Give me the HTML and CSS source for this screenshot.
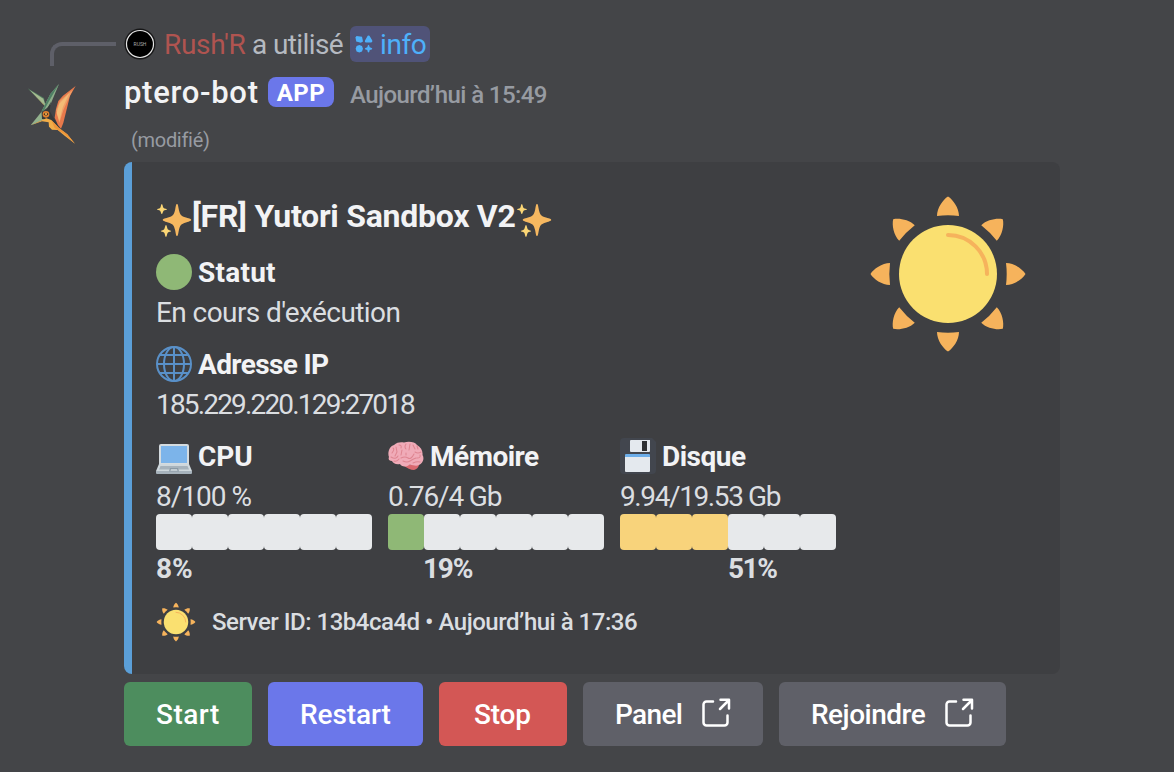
FILE: index.html
```
<!DOCTYPE html>
<html lang="fr">
<head>
<meta charset="utf-8">
<title>ptero-bot</title>
<link rel="stylesheet" href="styles.css">
</head>
<body>
<svg class="defs" width="0" height="0">
  <defs>
    <path id="ray" d="M80 2.500C85 5.500 91 14 91 22Q80 20.600 69 22C69 14 75 5.500 80 2.500Z"/>
    <symbol id="sun" viewBox="0 0 160 160">
      <g fill="#f6b35c">
        <use href="#ray"/>
        <use href="#ray" transform="rotate(45 80 80)"/>
        <use href="#ray" transform="rotate(90 80 80)"/>
        <use href="#ray" transform="rotate(135 80 80)"/>
        <use href="#ray" transform="rotate(180 80 80)"/>
        <use href="#ray" transform="rotate(225 80 80)"/>
        <use href="#ray" transform="rotate(270 80 80)"/>
        <use href="#ray" transform="rotate(315 80 80)"/>
      </g>
      <circle cx="80" cy="80" r="49" fill="#fae070"/>
      <path d="M80 41A39 39 0 0 1 119 80" fill="none" stroke="#f6b35c" stroke-width="4" stroke-linecap="round"/>
    </symbol>
    <symbol id="sparkles" viewBox="0 0 36 36">
      <path fill="#f6b860" d="M21 2C21.800 2 22 3 22.800 7.500C24 13 25 14 30 15.600C34 16.800 35.200 17.200 35.200 18S34 19.200 30 20.400C25 22 24 23 22.800 28.500C22 33 21.800 34 21 34S20 33 19.200 28.500C18 23 17 22 12 20.400C8 19.200 6.800 18.800 6.800 18S8 16.800 12 15.600C17 14 18 13 19.200 7.500C20 3 20.200 2 21 2Z"/>
      <path fill="#fbd675" d="M5.800 2C6.600 2 6.700 5 7.600 5.900S11 6.500 11 7.300S8.500 7.800 7.600 8.700S6.600 12 5.800 12S5 9.600 4.100 8.700S1 8 1 7.300S3.200 6.800 4.100 5.900S5 2 5.800 2ZM10 23C10.900 23 11 26.400 12 27.400S15.200 28.200 15.200 29S13 29.600 12 30.600S10.900 35 10 35S9 31.600 8 30.600S4.800 29.800 4.800 29S7 28.400 8 27.400S9.100 23 10 23Z"/>
    </symbol>
    <symbol id="external" viewBox="0 0 32 32">
      <path d="M13 4.500H6.500A3 3 0 0 0 3.500 7.500V25.500A3 3 0 0 0 6.500 28.500H24.500A3 3 0 0 0 27.500 25.500V18.500M20.500 2.800H29V11.500M28.500 3.500L20 12" fill="none" stroke="#fff" stroke-width="2.500" stroke-linecap="round" stroke-linejoin="round"/>
    </symbol>
  </defs>
</svg>

<main class="message">
  <aside class="gutter">
    <div class="spine"></div>
    <svg class="avatar" viewBox="75 220 160 185">
      <path fill="#527a60" d="M83 236L132 265L137 292Z"/>
      <path fill="#a4bc91" d="M88 240L130 267L137 289L125 278Z"/>
      <path fill="#e9ad62" d="M96 248L126 279L137 290L129 284Z"/>
      <path fill="#8fae8b" d="M177 223L151 253L124 306L141 295L151 285Z"/>
      <path fill="#4f8065" d="M177 223L147 275L132 302L124 306L151 253Z"/>
      <path fill="#92b18d" d="M124 307L92 347L107 341L142 325Z"/>
      <path fill="#36393a" d="M153 276L149 304L178 355L166 353L144 329L126 328L125 309L139 301Z"/>
      <path fill="#e8794b" d="M227 229L210 259L190 340L183 357L174 346L164 324L168 298L175 274L189 258Z"/>
      <path fill="#eea068" d="M218 240L180 273L169 302L178 340L190 302Z"/>
      <path fill="#f3bc76" d="M208 251L178 282L170 310L178 334L188 294Z"/>
      <path fill="#f2ad48" d="M92 347L139 326L154 331L177 355L202 374L225 402L195 379L173 361L156 360L147 351L146 338L126 335Z"/>
      <path fill="#ef9439" d="M154 331L177 355L202 374L225 402L193 373L164 355Z"/>
      <circle cx="138" cy="314" r="10" fill="#e1812d"/>
      <path d="M131 314Q137 305 145 313Q139 322 131 314Z" fill="#332620"/>
      <circle cx="138" cy="313" r="3" fill="#ffc45d"/>
    </svg>
  </aside>

  <section class="content">
    <div class="reply">
      <svg class="reply-avatar" viewBox="0 0 32 32">
        <circle cx="16" cy="16" r="15.500" fill="#171718"/>
        <circle cx="16" cy="16" r="13.500" fill="#000" stroke="#e6e6e6" stroke-width="1.200"/>
        <text x="16" y="17.800" text-anchor="middle" class="tiny">RUSH</text>
      </svg>
      <span class="reply-user">Rush'R</span>
      <span class="reply-text">a utilisé</span>
      <span class="command">
        <svg width="18" height="18" viewBox="0 0 18 18" fill="#4eb0fa">
          <path d="M1.500 1L7 1.800L8 6.500L5.800 7.700L1.200 6.600L.5 2.500Z"/>
          <path d="M13.500 .6Q14.500 .6 15.200 2L17.300 5.600Q17.700 7.500 16 7.500H11Q9.300 7.500 10 5.600L12 2Q12.600 .6 13.500 .6Z"/>
          <path d="M3 10.500L4.300 10L5.600 10.500L7 11L7.500 12.400L8 13.700L7.500 15L7 16.400L5.600 16.900L4.300 17.400L3 16.900L1.600 16.400L1.100 15L.6 13.700L1.100 12.400L1.600 11Z"/>
          <path d="M13.500 9.800Q14.300 9.800 14.700 12.300Q17.300 12.900 17.300 13.700T14.700 15Q14.300 17.500 13.500 17.500T12.300 15Q9.800 14.500 9.800 13.700T12.300 12.300Q12.700 9.800 13.500 9.800Z"/>
        </svg>
        <span class="command-name">info</span>
      </span>
    </div>

    <header class="author">
      <span class="name">ptero-bot</span>
      <span class="badge">APP</span>
      <time class="time">Aujourd’hui à 15:49</time>
    </header>
    <div class="edited">(modifié)</div>

    <article class="embed">
      <div class="embed-body">
        <h1 class="title"><svg class="emoji"><use href="#sparkles"/></svg><span class="title-text">[FR] Yutori Sandbox V2</span><svg class="emoji"><use href="#sparkles"/></svg></h1>

        <div class="field">
          <h2 class="field-name">
            <svg class="emoji" viewBox="0 0 36 36"><circle cx="18" cy="18" r="18" fill="#8fb876"/></svg>
            <span class="n-statut">Statut</span>
          </h2>
          <p class="value v-statut">En cours d'exécution</p>
        </div>

        <div class="field">
          <h2 class="field-name">
            <svg class="emoji" viewBox="0 0 36 36" fill="none" stroke="#5990c8" stroke-width="2"><circle cx="18" cy="18" r="17"/><ellipse cx="18" cy="18" rx="10" ry="17"/><path d="M18 1V35M1 18H35M4 9H32M4 27H32"/></svg>
            <span class="n-ip">Adresse IP</span>
          </h2>
          <p class="value v-ip">185.229.220.129:27018</p>
        </div>

        <div class="stats">
          <div class="stat">
            <h2 class="field-name">
              <svg class="emoji" viewBox="0 0 36 36">
                <path fill="#d4dbdf" d="M5 6H31Q33 6 33 8V26H3V8Q3 6 5 6Z"/>
                <path fill="#7cb4ea" d="M5 8H31V25H5Z"/>
                <path fill="#cfd8dd" d="M3 26H33L36 33H0Z"/>
                <path fill="#a7b3bc" d="M4.500 28H31.500L33 31.500H3ZM0 33H36V35Q36 36 35 36H1Q0 36 0 35Z"/>
                <path fill="#8b9aa5" d="M14 30H22L23 33.500H13Z"/><path fill="#c2ccd2" d="M15 31H21L21.600 33H14.400Z"/>
              </svg>
              <span class="n-cpu">CPU</span>
            </h2>
            <p class="value short v-cpu">8/100 %</p>
            <div class="bar"><i></i><i></i><i></i><i></i><i></i><i></i></div>
            <p class="percent">8%</p>
          </div>
          <div class="stat">
            <h2 class="field-name">
              <svg class="emoji" viewBox="0 0 36 36">
                <path fill="#d9686f" d="M15 27Q25 26 31 27Q30 31 26 32Q21 32 15 27Z"/>
                <path fill="#f0abb8" d="M1 19C-1 14 2 8 6 7C9 4 13 4 16 4.500C21 3 27 4 29 7C33 9 35 13 34.500 17C37 21 34 26 31 27C27 29 24 26 21 27C17 30 13 28 12 26C8 27 5 25 4 23C1 23 0 21 1 19Z"/>
                <path fill="none" stroke="#de8591" stroke-width="1.050" stroke-linecap="round" d="M4 15Q7 11 5 10M8 9L9 14L7 18M11 7Q14 7 13 10M14 12L13 17M18 6Q16 9 18 11M18 15V17M22 6L21 12M25 7L27 11M29 8L30 11M3 19Q8 22 10 18M6 23Q9 24 11 21M13 20Q17 18 20 20T26 16M27 14Q30 16 33 14M15 23Q19 25 22 23T28 20M29 20Q33 20 32 17M25 25Q29 23 32 24"/>
              </svg>
              <span class="n-mem">Mémoire</span>
            </h2>
            <p class="value short v-mem">0.76/4 Gb</p>
            <div class="bar"><i class="green"></i><i></i><i></i><i></i><i></i><i></i></div>
            <p class="percent after-one">19%</p>
          </div>
          <div class="stat">
            <h2 class="field-name">
              <svg class="emoji" viewBox="0 0 36 36">
                <path fill="#42464e" d="M4 0H32L36 4V32Q36 36 32 36H4Q0 36 0 32V4Q0 0 4 0Z"/>
                <path fill="#e4e9ee" d="M11 2H30V13Q30 14 29 14H11Q10 14 10 13V3Q10 2 11 2ZM5 18H30V33Q30 34 29 34H6Q5 34 5 33Z"/>
                <path fill="#2e3033" d="M22 3H27V13H22Z"/>
                <path fill="#6caeea" d="M6 16H29Q30 16 30 17V19H5V17Q5 16 6 16Z"/>
              </svg>
              <span class="n-disk">Disque</span>
            </h2>
            <p class="value short v-disk">9.94/19.53 Gb</p>
            <div class="bar"><i class="yellow"></i><i class="yellow"></i><i class="yellow"></i><i></i><i></i><i></i></div>
            <p class="percent after-three">51%</p>
          </div>
        </div>

        <footer class="footer">
          <svg class="footer-icon"><use href="#sun"/></svg>
          <span class="footer-text">Server ID: 13b4ca4d • Aujourd’hui à 17:36</span>
        </footer>
      </div>
      <svg class="thumb"><use href="#sun"/></svg>
    </article>

    <div class="buttons">
      <button class="btn start"><span>Start</span></button>
      <button class="btn restart"><span>Restart</span></button>
      <button class="btn stop"><span>Stop</span></button>
      <button class="btn panel"><span>Panel</span><svg class="ext"><use href="#external"/></svg></button>
      <button class="btn join"><span>Rejoindre</span><svg class="ext"><use href="#external"/></svg></button>
    </div>
  </section>
</main>
</body>
</html>
```
FILE: styles.css
```
* { box-sizing: border-box; margin: 0; padding: 0; }
body { background: #444548; font-family: Roboto, "Noto Sans", sans-serif; font-size: 28px; color: #dbdee1; white-space: nowrap; overflow: hidden; }
svg { display: block; flex: none; }
.defs { position: absolute; }
.message { display: flex; width: 1174px; height: 772px; }
.gutter { width: 124px; flex: none; padding-top: 42px; }
.spine { width: 66px; height: 24px; margin-left: 50px; border: solid #5e5f68; border-width: 4px 0 0 4px; border-top-left-radius: 12px; }
.avatar { width: 53.300px; height: 61.700px; margin: 17px 0 0 25px; }
.content { padding-top: 26px; }

.reply { display: flex; align-items: center; height: 36px; color: #b5bac1; }
.reply-avatar { width: 32px; height: 32px; }
.tiny { font: 5px Roboto, sans-serif; fill: #aaa; }
.reply-user { width: 88px; padding-left: 8px; color: #b05450; letter-spacing: -.3px; }
.reply-text { width: 106px; padding-left: 8px; letter-spacing: -.6px; }
.command { display: flex; align-items: center; width: 80px; height: 36px; padding-left: 5px; gap: 7px; border-radius: 6px; background: #505378; color: #4eb0fa; }
.command-name { letter-spacing: -.4px; }

.author { display: flex; height: 30px; margin-top: 15px; align-items: center; }
.name { width: 144px; padding-top: 1px; font-size: 31px; font-weight: 500; color: #f2f3f5; letter-spacing: .7px; }
.badge { width: 66px; height: 30px; border-radius: 8px; background: #6b77ea; color: #fff; font-size: 24px; font-weight: 700; line-height: 32px; text-align: center; letter-spacing: .5px; }
.time { margin-left: 16px; padding-top: 6px; font-size: 24px; font-weight: 500; color: #979ba2; letter-spacing: -.58px; }
.edited { height: 40px; margin: 13px 0 2px 7px; line-height: 40px; font-size: 20px; color: #979ba2; letter-spacing: -.3px; }

.embed { display: flex; justify-content: space-between; width: 936px; height: 512px; padding: 34px 32px 32px 24px; border-left: 8px solid #5b9fd8; border-radius: 8px; background: #3e3f42; }
.thumb { width: 160px; height: 160px; margin-top: -2px; }
.emoji { width: 36px; height: 36px; }
.title { display: flex; height: 40px; margin-bottom: 16px; line-height: 40px; font-size: 32px; color: #f2f3f5; }
.title .emoji { margin-top: 6px; }
.title-text { width: 324px; letter-spacing: -.27px; }
.field { margin-bottom: 12px; }
.field-name { display: flex; align-items: center; gap: 6px; height: 40px; font-size: 28px; color: #f2f3f5; }
.n-statut { letter-spacing: .25px; }
.n-ip { letter-spacing: -.63px; }
.n-mem { letter-spacing: -.5px; }
.n-disk { letter-spacing: -.5px; }
.value { height: 40px; line-height: 42px; font-weight: 400; }
.short { height: 38px; }
.v-statut { letter-spacing: -.58px; }
.v-ip { letter-spacing: -1.830px; }
.v-cpu { letter-spacing: -1px; }
.v-mem { letter-spacing: -1.150px; }
.v-disk { letter-spacing: -1.400px; }
.stats { display: grid; grid-template-columns: repeat(3, 216px); gap: 16px; }
.bar { display: flex; }
.bar i { width: 36px; height: 36px; border-radius: 4px; background: #e7e9eb; }
.bar .green { background: #8fb876; }
.bar .yellow { background: #f8d37b; }
.percent { height: 36px; line-height: 38px; font-weight: 700; }
.after-one { padding-left: 35px; letter-spacing: -1.200px; }
.after-three { padding-left: 108px; letter-spacing: -1.500px; }
.footer { display: flex; align-items: center; gap: 16px; height: 40px; margin-top: 16px; font-size: 24px; font-weight: 500; }
.footer-icon { width: 40px; height: 40px; }
.footer-text { letter-spacing: -.49px; }

.buttons { display: flex; gap: 16px; margin-top: 8px; }
.btn { display: flex; align-items: center; height: 64px; padding-left: 32px; border: 0; border-radius: 6px; color: #fff; font: 500 28px Roboto, sans-serif; }
.start { width: 128px; background: #4d8d5e; letter-spacing: .5px; }
.restart { width: 155px; background: #6b77ea; letter-spacing: -.1px; }
.stop { width: 128px; padding-left: 35px; background: #d35755; letter-spacing: -.2px; }
.panel { width: 180px; background: #5f6068; letter-spacing: -.65px; }
.join { width: 227px; background: #5f6068; letter-spacing: -.5px; }
.ext { width: 32px; height: 32px; margin: -2px 31px 0 auto; }
```
